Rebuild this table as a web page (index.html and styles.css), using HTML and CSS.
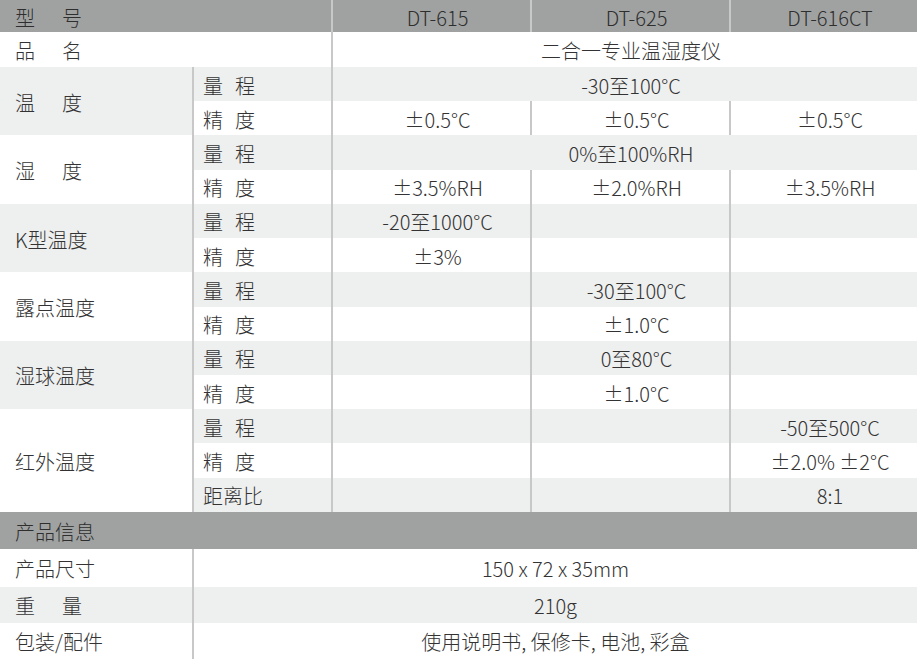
FILE: index.html
```html
<!DOCTYPE html>
<html lang="zh-CN">
<head>
<meta charset="utf-8">
<title>规格参数</title>
<link rel="stylesheet" href="styles.css">
</head>
<body>
<div class="spec">
  <div class="c head lbl span-c2"><span class="w2">型号</span></div>
  <div class="c d head">DT-615</div>
  <div class="c d head">DT-625</div>
  <div class="c d head">DT-616CT</div>

  <div class="c lbl span-c2"><span class="w2">品名</span></div>
  <div class="c d span-c3">二合一专业温湿度仪</div>

  <div class="c lbl alt span-r2"><span class="w2">温度</span></div>
  <div class="c sub alt"><span class="w1">量程</span></div>
  <div class="c d alt span-c3">-30至100°C</div>
  <div class="c sub"><span class="w1">精度</span></div>
  <div class="c d">±0.5°C</div>
  <div class="c d">±0.5°C</div>
  <div class="c d">±0.5°C</div>

  <div class="c lbl span-r2"><span class="w2">湿度</span></div>
  <div class="c sub alt"><span class="w1">量程</span></div>
  <div class="c d alt span-c3">0%至100%RH</div>
  <div class="c sub"><span class="w1">精度</span></div>
  <div class="c d">±3.5%RH</div>
  <div class="c d">±2.0%RH</div>
  <div class="c d">±3.5%RH</div>

  <div class="c lbl alt span-r2">K型温度</div>
  <div class="c sub alt"><span class="w1">量程</span></div>
  <div class="c d alt">-20至1000°C</div>
  <div class="c d alt"></div>
  <div class="c d alt"></div>
  <div class="c sub"><span class="w1">精度</span></div>
  <div class="c d">±3%</div>
  <div class="c d"></div>
  <div class="c d"></div>

  <div class="c lbl span-r2">露点温度</div>
  <div class="c sub alt"><span class="w1">量程</span></div>
  <div class="c d alt"></div>
  <div class="c d alt">-30至100°C</div>
  <div class="c d alt"></div>
  <div class="c sub"><span class="w1">精度</span></div>
  <div class="c d"></div>
  <div class="c d">±1.0°C</div>
  <div class="c d"></div>

  <div class="c lbl alt span-r2">湿球温度</div>
  <div class="c sub alt"><span class="w1">量程</span></div>
  <div class="c d alt"></div>
  <div class="c d alt">0至80°C</div>
  <div class="c d alt"></div>
  <div class="c sub"><span class="w1">精度</span></div>
  <div class="c d"></div>
  <div class="c d">±1.0°C</div>
  <div class="c d"></div>

  <div class="c lbl span-r3">红外温度</div>
  <div class="c sub alt"><span class="w1">量程</span></div>
  <div class="c d alt"></div>
  <div class="c d alt"></div>
  <div class="c d alt">-50至500°C</div>
  <div class="c sub"><span class="w1">精度</span></div>
  <div class="c d"></div>
  <div class="c d"></div>
  <div class="c d">±2.0% ±2°C</div>
  <div class="c sub alt">距离比</div>
  <div class="c d alt"></div>
  <div class="c d alt"></div>
  <div class="c d alt">8:1</div>

  <div class="c head lbl span-all">产品信息</div>

  <div class="c lbl">产品尺寸</div>
  <div class="c span-c4">150 x 72 x 35mm</div>
  <div class="c lbl alt"><span class="w2">重量</span></div>
  <div class="c alt span-c4">210g</div>
  <div class="c lbl">包装/配件</div>
  <div class="c span-c4">使用说明书, 保修卡, 电池, 彩盒</div>
</div>
</body>
</html>
```

FILE: styles.css
```css
html, body {
  margin: 0;
  padding: 0;
  background: #ffffff;
}

body {
  font-family: "Noto Sans CJK SC", "Noto Sans", sans-serif;
  font-weight: 300;
  font-size: 20px;
  color: #333333;
}

.spec {
  display: grid;
  grid-template-columns: 192px 137px 197px 197px 186px;
  grid-template-rows: 32px 35px repeat(13, 34.23px) 37px 38px 36px 36px;
  column-gap: 2px;
  row-gap: 0;
  background: #c8c8c8;
  width: 917px;
}

.c {
  box-sizing: border-box;
  background: #ffffff;
  display: flex;
  align-items: center;
  justify-content: center;
  white-space: nowrap;
  line-height: 1;
  padding-top: 3px;
}

.d {
  padding-left: 12px;
}

.alt {
  background: #eeefef;
}

.head {
  background: #a0a2a1;
  color: #2e2e2e;
}

.lbl {
  justify-content: flex-start;
  padding-left: 15px;
}

.sub {
  justify-content: flex-start;
  padding-left: 9px;
}

.w2 {
  letter-spacing: 27px;
}

.w1 {
  letter-spacing: 12px;
}

.span-c2 { grid-column: span 2; }
.span-c3 { grid-column: span 3; }
.span-c4 { grid-column: span 4; }
.span-all { grid-column: 1 / -1; }
.span-r2 { grid-row: span 2; }
.span-r3 { grid-row: span 3; }
```
